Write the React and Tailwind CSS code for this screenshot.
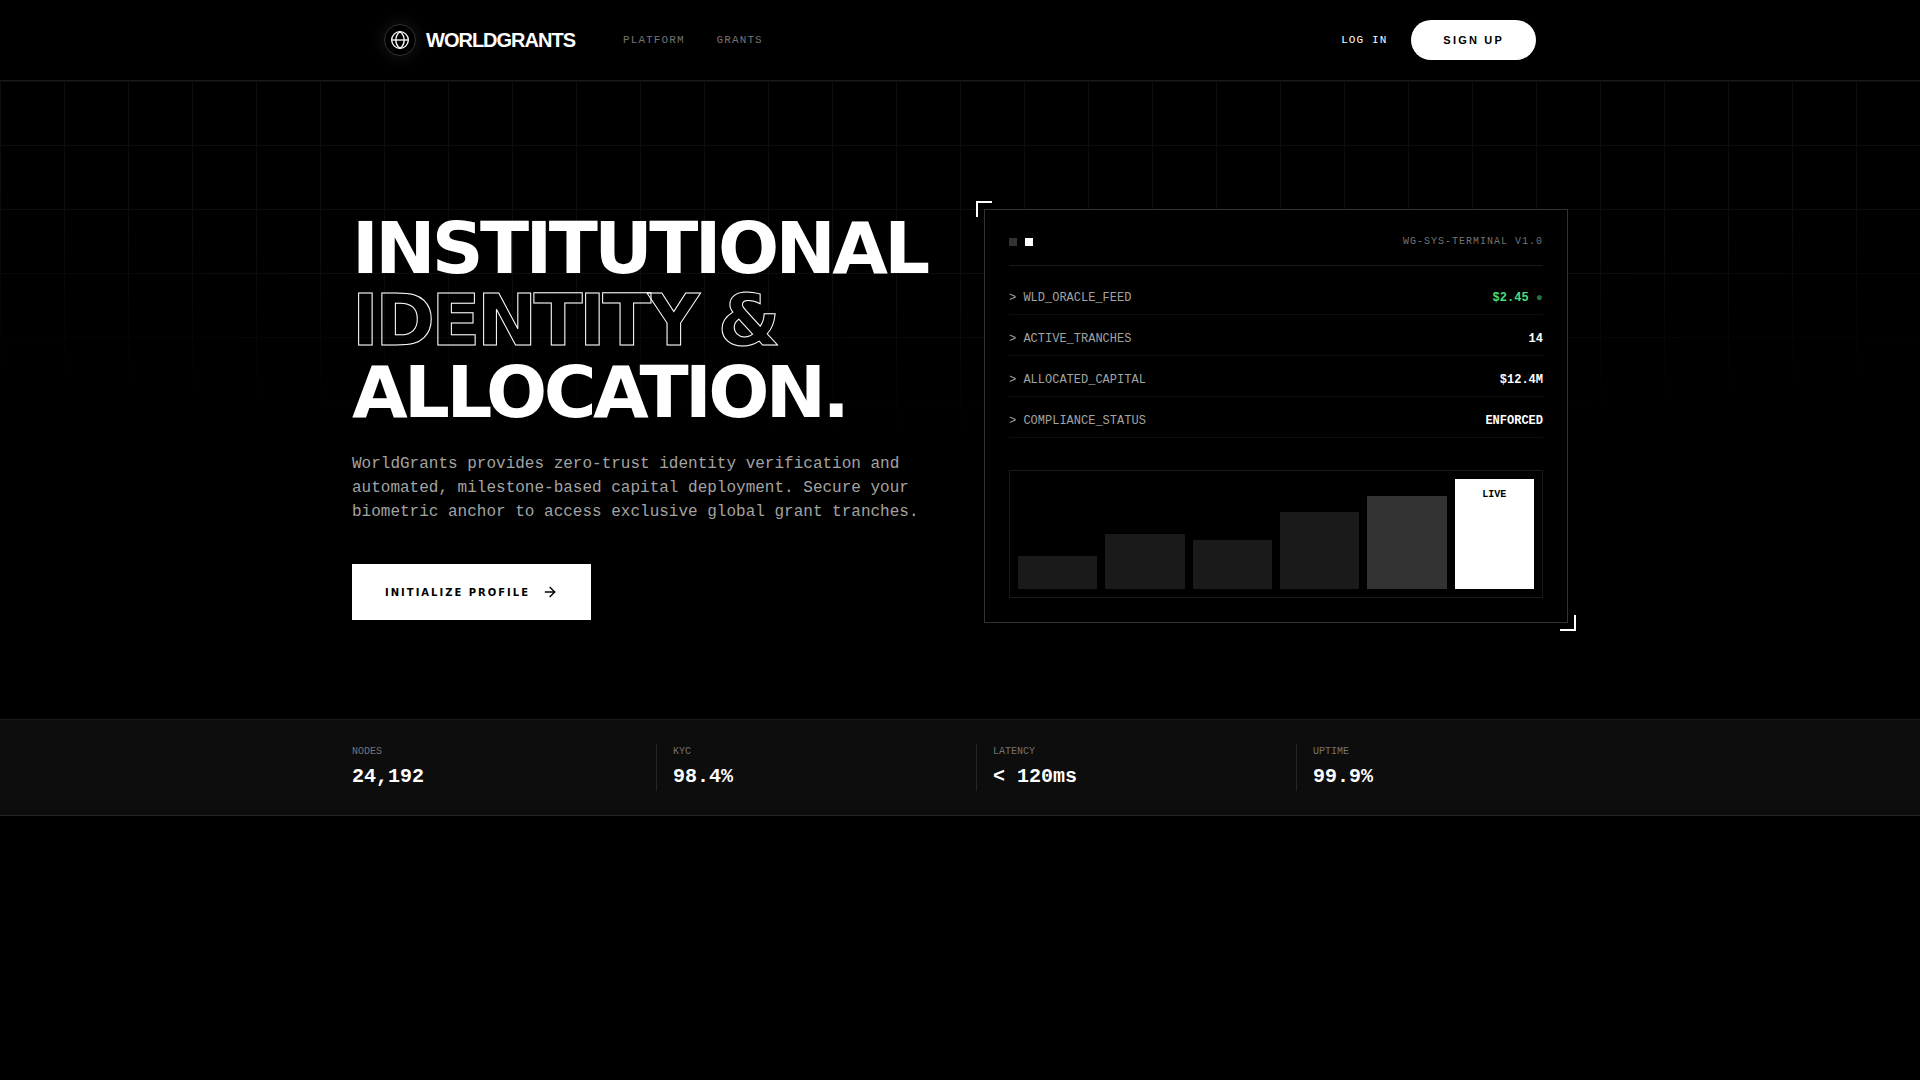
import { ArrowRight } from 'lucide-react';

const navLinks = [
  { label: 'PLATFORM', href: '#platform' },
  { label: 'GRANTS', href: '#grants' },
];

const feed = [
  { label: 'WLD_ORACLE_FEED', value: '$2.45', live: true },
  { label: 'ACTIVE_TRANCHES', value: '14' },
  { label: 'ALLOCATED_CAPITAL', value: '$12.4M' },
  { label: 'COMPLIANCE_STATUS', value: 'ENFORCED' },
];

const bars = [
  { height: 30, color: 'bg-[#1a1a1a]' },
  { height: 50, color: 'bg-[#1a1a1a]' },
  { height: 45, color: 'bg-[#1a1a1a]' },
  { height: 70, color: 'bg-[#1a1a1a]' },
  { height: 85, color: 'bg-[#333333]' },
  { height: 100, color: 'bg-white', label: 'LIVE' },
];

const stats = [
  { label: 'NODES', value: '24,192' },
  { label: 'KYC', value: '98.4%' },
  { label: 'LATENCY', value: '< 120ms' },
  { label: 'UPTIME', value: '99.9%' },
];

const GlobeMark = () => (
  <svg viewBox="0 0 24 24" className="w-5 h-5" fill="none" stroke="currentColor" strokeWidth="1.6" aria-hidden="true">
    <circle cx="12" cy="12" r="10" />
    <path d="M12 2c3.2 2.4 5 6.200 5 10s-1.800 7.600-5 10c-3.200-2.400-5-6.200-5-10s1.800-7.600 5-10z" />
    <path d="M2 12h20" />
  </svg>
);

const Navbar = () => (
  <header className="border-b border-[#1a1a1a] bg-black">
    <div className="max-w-7xl mx-auto px-16 h-20 flex items-center justify-between">
      <div className="flex items-center gap-12">
        <a href="#home" className="flex items-center gap-2.5 text-white">
          <span className="w-8 h-8 rounded-full border border-[#333333] flex items-center justify-center shadow-[0_0_15px_rgba(255,255,255,0.1)]">
            <GlobeMark />
          </span>
          <span className="font-['Liberation_Sans',sans-serif] text-xl font-bold tracking-tighter">WORLDGRANTS</span>
        </a>
        <nav className="flex items-center gap-8">
          {navLinks.map(link => (
            <a key={link.label} href={link.href} className="text-[11px] tracking-widest text-[#737373]">
              {link.label}
            </a>
          ))}
        </nav>
      </div>
      <div className="flex items-center gap-6">
        <a href="#login" className="text-[11px] tracking-widest text-white">LOG IN</a>
        <button className="h-10 px-8 rounded-full bg-white text-black font-['Liberation_Sans',sans-serif] text-[11px] font-bold tracking-[0.2em]">
          SIGN UP
        </button>
      </div>
    </div>
  </header>
);

const Terminal = () => (
  <div className="relative">
    <span className="absolute -top-2 -left-2 w-4 h-4 border-t-2 border-l-2 border-white" />
    <span className="absolute -bottom-2 -right-2 w-4 h-4 border-b-2 border-r-2 border-white" />
    <div className="border border-[#333333] bg-black p-6">
      <div className="flex items-center justify-between border-b border-[#1a1a1a] pb-4 mb-6">
        <div className="flex gap-2">
          <span className="w-2 h-2 bg-[#333333]" />
          <span className="w-2 h-2 bg-white" />
        </div>
        <span className="text-[10px] leading-[15px] tracking-widest text-[#737373]">WG-SYS-TERMINAL V1.0</span>
      </div>

      <dl className="space-y-4 text-xs">
        {feed.map(row => (
          <div key={row.label} className="flex items-center justify-between border-b border-[#0d0d0d] pb-2">
            <dt className="text-[#a3a3a3]">&gt; {row.label}</dt>
            <dd className={`font-bold ${row.live ? 'text-[#4ade80]' : 'text-white'}`}>
              {row.value}
              {row.live && <span className="opacity-50"> ●</span>}
            </dd>
          </div>
        ))}
      </dl>

      <div className="mt-8 h-32 border border-[#1a1a1a] p-2 flex items-end gap-2">
        {bars.map((bar, i) => (
          <div key={i} className={`flex-1 ${bar.color}`} style={{ height: `${bar.height}%` }}>
            {bar.label && (
              <span className="block pt-2 text-center text-[10px] leading-[15px] font-bold text-black">{bar.label}</span>
            )}
          </div>
        ))}
      </div>
    </div>
  </div>
);

const App = () => {
  return (
    <div className="min-h-screen bg-black text-white font-['Liberation_Mono',monospace]">
      <Navbar />

      <main>
        <section className="relative">
          <div className="absolute inset-0 bg-[linear-gradient(to_right,#0d0d0d_1px,transparent_1px),linear-gradient(to_bottom,#0d0d0d_1px,transparent_1px)] bg-[size:64px_64px] [mask-image:radial-gradient(ellipse_80%_50%_at_50%_0%,#000_70%,transparent_110%)]" />
          <div className="relative max-w-7xl mx-auto px-8 pt-32 pb-24 grid grid-cols-1 lg:grid-cols-2 gap-12 items-center">
            <div>
              <h1 className="font-['DejaVu_Sans',sans-serif] text-7xl leading-none font-bold tracking-tighter mb-6">
                INSTITUTIONAL
                <br />
                <span className="text-transparent [-webkit-text-stroke:1px_white]">IDENTITY &amp;</span>
                <br />
                ALLOCATION.
              </h1>
              <p className="text-base text-[#a3a3a3] mb-10">
                WorldGrants provides zero-trust identity verification and automated, milestone-based capital deployment.
                Secure your biometric anchor to access exclusive global grant tranches.
              </p>
              <button className="h-14 px-8 border border-white bg-white text-black flex items-center gap-3 font-['DejaVu_Sans',sans-serif] text-[10px] font-bold tracking-[0.2em]">
                INITIALIZE PROFILE
                <ArrowRight className="w-4 h-4" />
              </button>
            </div>
            <Terminal />
          </div>
        </section>

        <section className="border-t border-b border-t-[#1a1a1a] border-b-[#262626] bg-[#0d0d0d]">
          <div className="max-w-7xl mx-auto px-8 py-6">
            <div className="-mx-4 grid grid-cols-4 gap-8">
              {stats.map(stat => (
                <div key={stat.label} className="pl-4 border-l border-[#262626] first:border-l-0">
                  <p className="text-[10px] leading-[15px] text-[#737373] mb-1">{stat.label}</p>
                  <p className="text-xl font-bold">{stat.value}</p>
                </div>
              ))}
            </div>
          </div>
        </section>
      </main>
    </div>
  );
};

export default App;
